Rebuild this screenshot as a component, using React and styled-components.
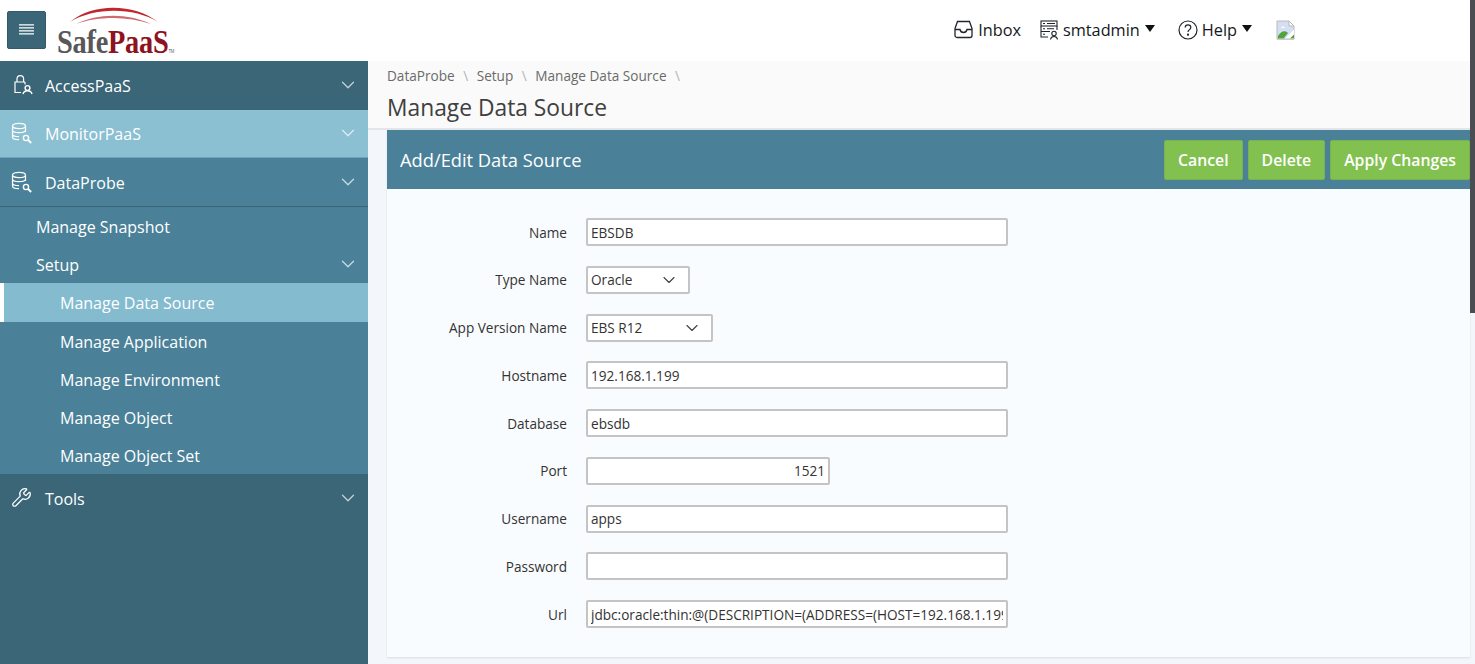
import React from "react";
import styled, { createGlobalStyle } from "styled-components";
import { ChevronDown, Wrench } from "lucide-react";

const Global = createGlobalStyle`
  html, body { margin: 0; padding: 0; height: 100%; overflow: hidden; background: #fff; }
  #root { height: 100%; }
  * { box-sizing: border-box; }
  body { font-family: "Open Sans", "Noto Sans", "Liberation Sans", sans-serif; }
`;

const Page = styled.div`
  width: 1475px; height: 664px; display: flex; flex-direction: column; position: relative; overflow: hidden;
`;
const Header = styled.header`
  height: 61px; flex: none; display: flex; align-items: center; background: #fff; padding-left: 7px;
`;
const MenuButton = styled.button`
  width: 39px; height: 38px; margin-top: -2px; border: 1px solid #33596a; border-radius: 2px; background: #3a6678;
  display: flex; align-items: center; justify-content: center; padding: 0;
`;
const Logo = styled.div`
  position: relative; width: 120px; height: 52px; margin: 5px 0 0 11px; flex: none;
`;
const LogoArc = styled.svg`
  position: absolute; left: 13px; top: 0;
`;
const LogoText = styled.div`
  position: absolute; left: 0; top: 16px; font-family: "Liberation Serif", serif; font-size: 33px; line-height: 38px; font-weight: 700; color: #58585a; white-space: nowrap; letter-spacing: -0.3px;
  transform: scaleX(0.86); transform-origin: left;
`;
const LogoRed = styled.span`
  color: #8f1220;
`;
const Tm = styled.span`
  font-size: 5px; font-weight: 400; color: #666; font-family: "Liberation Sans", sans-serif;
`;
const TopNav = styled.nav`
  margin-left: auto; display: flex; align-items: center; margin-right: 180px; margin-top: -2px;
`;
const TopItem = styled.div`
  display: flex; align-items: center; gap: ${p => p.$gap ?? 4}px; margin-left: ${p => p.$ml ?? 0}px; font-size: 16.3px; color: #14181c; line-height: 20px;
`;
const Caret = styled.span`
  width: 0; height: 0; border-left: 5px solid transparent; border-right: 5px solid transparent; border-top: 7px solid #111; margin: -3px 0 0 1px;
`;
const Body = styled.div`
  flex: 1; display: flex; min-height: 0;
`;
const Sidebar = styled.aside`
  width: 368px; flex: none; background: #3a6678; display: flex; flex-direction: column;
`;
const NavHead = styled.div`
  height: ${p => p.$h}px; flex: none; display: flex; align-items: center; padding: 0 9px 0 11px; color: #fff; font-size: 16px;
  background: ${p => p.$bg};
  border-bottom: 1px solid ${p => p.$line};
`;
const HeadIcon = styled.svg`
  width: 22px; height: 22px; flex: none; margin-right: 12px; margin-top: -1px;
`;
const Label = styled.span`
  flex: 1; margin-top: 1px;
`;
const SubLabel = styled.span`
  flex: 1;
`;
const Chevron = styled(ChevronDown)`
  width: 22px; height: 22px; opacity: .7; margin-top: -1px; stroke-width: 1.4;
`;
const SubChevron = styled(Chevron)`
  margin-top: -3px;
`;
const SubGroup = styled.div`
  background: #4a8199; display: flex; flex-direction: column; border-bottom: 1px solid #3a6678;
`;
const SubItem = styled.div`
  height: 38.2px; display: flex; align-items: center; color: #fff; font-size: 16px; padding: 2px 9px 0 ${p => p.$indent}px;
  ${p => p.$active && `background: #84bbcf; border-left: 4px solid #fff; padding-left: ${p.$indent - 4}px;`}
`;
const Main = styled.main`
  flex: 1; display: flex; flex-direction: column; background: #f3f7fb; min-width: 0;
`;
const Crumbs = styled.div`
  height: 69px; flex: none; background: #fafafa; border-bottom: 2px solid #e3e6e8; padding: 4px 0 0 19px;
`;
const CrumbRow = styled.div`
  display: flex; font-size: 13.6px; line-height: 22px; color: #6a6a6a; gap: 8.5px;
`;
const Slash = styled.span`
  color: #b5b5b5;
`;
const PageTitle = styled.h1`
  margin: 5px 0 0; font-size: 22.8px; line-height: 32px; font-weight: 400; color: #404040;
`;
const Panel = styled.section`
  margin: 0 5px 0 19px; background: #f9fcfe; height: 527px; box-shadow: 0 1px 2px rgba(0,0,0,.1);
`;
const PanelHead = styled.div`
  height: 59px; background: #4a8199; display: flex; align-items: center; padding-left: 13px;
`;
const PanelTitle = styled.h2`
  margin: 0; flex: 1; color: #fff; font-weight: 400; font-size: 18.3px;
`;
const Actions = styled.div`
  display: flex; gap: 5px;
`;
const ActionButton = styled.button`
  height: 40px; padding: 0 13px; border: 1px solid #78b44e; border-radius: 2px; background: #82c150; color: #fff;
  font-family: inherit; font-size: 15.8px; font-weight: 600; white-space: nowrap;
`;
const Form = styled.div`
  display: flex; flex-direction: column; gap: 19.75px; padding: 29px 0 0 0;
`;
const Row = styled.div`
  display: flex; align-items: center; height: 28px;
`;
const FieldLabel = styled.label`
  width: 180px; text-align: right; margin-right: 19px; font-size: 13.6px; color: #333;
`;
const Input = styled.input`
  width: ${p => p.$w ?? 422}px; height: 28px; border: 2px solid #c4c4c4; border-radius: 2px; background: #fff; padding: 0 3px;
  font-family: inherit; font-size: 13.6px; color: #333; text-align: ${p => p.$right ? "right" : "left"}; outline: none;
`;
const SelectBox = styled.div`
  width: ${p => p.$w}px; height: 28px; border: 2px solid #c4c4c4; border-radius: 2px; background: #fff; display: flex; align-items: center; justify-content: space-between;
  padding: 0 9px 0 3px; font-size: 13.6px; color: #333;
`;
const SelectChevron = styled(ChevronDown)`
  width: 20px; height: 20px; color: #444; stroke-width: 1.4;
`;
const Scrollbar = styled.div`
  position: absolute; right: 0; top: 0; width: 5px; height: 313px; background: #4a4e53;
`;

const DbSearch = () => (
  <HeadIcon viewBox="0 0 22 22" fill="none" stroke="#fff" strokeWidth="1.2">
    <ellipse cx="8" cy="4" rx="6.5" ry="2.6" />
    <path d="M1.500 4v11c0 1.500 2.900 2.700 6.500 2.700M14.500 4v6M1.500 8c0 1.500 2.900 2.600 6.500 2.600s6.500-1.100 6.500-2.600M1.500 12c0 1.500 2.900 2.600 6.500 2.600" />
    <circle cx="15" cy="16" r="2.600" strokeWidth="1.400" />
    <path d="M17 18l3.200 3" strokeWidth="1.800" />
  </HeadIcon>
);
const LockUser = () => (
  <HeadIcon viewBox="0 0 22 22" fill="none" stroke="#fff" strokeWidth="1.2">
    <path d="M6 8V5a3.300 3.300 0 0 1 6.600 0v3" />
    <path d="M14 8H4v10.500h6M14 8v2.500" />
    <circle cx="16.500" cy="14" r="2.400" strokeWidth="1.400" />
    <path d="M12 20c.5-2.200 2.200-3.300 4.500-3.300s4 1.100 4.500 3.300" strokeWidth="1.400" />
  </HeadIcon>
);
const ToolIcon = styled(Wrench)`
  width: 21px; height: 21px; margin-right: 13px; margin-top: -2px; flex: none; stroke-width: 1.4;
`;
const InboxIcon = () => (
  <svg width="19" height="19" viewBox="0 0 19 19" fill="none" stroke="#20262c" strokeWidth="1.300">
    <path d="M1 8.500 3.500 1.500h12L18 8.500v7a2 2 0 0 1-2 2H3a2 2 0 0 1-2-2z" />
    <path d="M1 9.500h5c.4 2 1.700 3 3.500 3s3.100-1 3.500-3h5" />
  </svg>
);
const ServerUser = () => (
  <svg width="19" height="20" viewBox="0 0 19 20" fill="none" stroke="#20262c" strokeWidth="1.100">
    <rect x="1" y="1" width="16" height="5" />
    <path d="M1 6v5.500h9M1 11.500V17h7M17 6v4" />
    <path d="M3 3.500h2M7 3.500h8M3 8.800h2M7 8.800h7M3 14.200h2" />
    <circle cx="14" cy="13.500" r="2.200" />
    <path d="M10.500 19.500c.3-2 1.600-3 3.500-3s3.200 1 3.500 3" />
  </svg>
);
const HelpIcon = () => (
  <svg width="20" height="20" viewBox="0 0 20 20" fill="none" stroke="#20262c" strokeWidth="1.200">
    <circle cx="10" cy="10" r="9" />
    <path d="M7.200 7.600c0-1.700 1.200-2.700 2.800-2.700s2.800 1 2.800 2.500c0 2.300-2.800 2.200-2.800 4.600" />
    <circle cx="10" cy="14.700" r=".5" fill="#20262c" />
  </svg>
);
const BrokenImage = () => (
  <svg width="19" height="20" viewBox="0 0 19 20">
    <path d="M1 1h12l5 5v13H1z" fill="#d5def2" stroke="#b9b9b9" />
    <path d="M13 1v5h5z" fill="#fff" stroke="#b9b9b9" />
    <path d="M5 8c1-2 3-2 4 0z" fill="#fff" />
    <path d="M2 18.500V16c3-5 7-6 10-3l-4.500 5.500z" fill="#4fa53b" />
    <path d="M18 9.500 8.500 19H18z" fill="#fff" />
    <path d="M18 14.500l-4 4h4z" fill="#4fa53b" />
    <path d="M1 19h17" stroke="#b9b9b9" />
  </svg>
);

const fields = [
  { label: "Name", value: "EBSDB" },
  { label: "Type Name", select: "Oracle", w: 104 },
  { label: "App Version Name", select: "EBS R12", w: 127 },
  { label: "Hostname", value: "192.168.1.199" },
  { label: "Database", value: "ebsdb" },
  { label: "Port", value: "1521", w: 244, right: true },
  { label: "Username", value: "apps" },
  { label: "Password", value: "" },
  { label: "Url", value: "jdbc:oracle:thin:@(DESCRIPTION=(ADDRESS=(HOST=192.168.1.199)(PORT=1521)))" },
];

const subItems = ["Manage Data Source", "Manage Application", "Manage Environment", "Manage Object", "Manage Object Set"];

export default function App() {
  return (
    <Page>
      <Global />
      <Header>
        <MenuButton aria-label="menu">
          <svg width="15" height="11" viewBox="0 0 15 11" stroke="#fff" strokeWidth="1.200"><path d="M0 .8h15M0 3.800h15M0 6.800h15M0 9.800h15" /></svg>
        </MenuButton>
        <Logo>
          <LogoArc width="90" height="20" viewBox="0 0 90 20" fill="none">
            <path d="M0 15C22 -4 64 -4 88 15C64 0 24 0 0 15Z" fill="#c1272d" />
            <path d="M6 17C28 6 58 6 81 17C58 9 28 9 6 17Z" fill="#cf6a6f" />
          </LogoArc>
          <LogoText>Safe<LogoRed>PaaS</LogoRed><Tm>TM</Tm></LogoText>
        </Logo>
        <TopNav>
          <TopItem $gap={5}><InboxIcon />Inbox</TopItem>
          <TopItem $ml={19}><ServerUser />smtadmin<Caret /></TopItem>
          <TopItem $ml={23}><HelpIcon />Help<Caret /></TopItem>
          <TopItem $ml={24}><BrokenImage /></TopItem>
        </TopNav>
      </Header>
      <Body>
        <Sidebar>
          <NavHead $h={49} $bg="#3a6678" $line="#3a6678"><LockUser /><Label>AccessPaaS</Label><Chevron /></NavHead>
          <NavHead $h={48} $bg="#8bbfd2" $line="#6fa5b9"><DbSearch /><Label>MonitorPaaS</Label><Chevron /></NavHead>
          <NavHead $h={49} $bg="#4a8199" $line="#3a6678"><DbSearch /><Label>DataProbe</Label><Chevron /></NavHead>
          <SubGroup>
            <SubItem $indent={36}>Manage Snapshot</SubItem>
            <SubItem $indent={36}><SubLabel>Setup</SubLabel><SubChevron /></SubItem>
            {subItems.map((s, i) => (
              <SubItem key={s} $indent={60} $active={i === 0}>{s}</SubItem>
            ))}
          </SubGroup>
          <NavHead $h={47} $bg="#3a6678" $line="#3a6678"><ToolIcon color="#fff" /><Label>Tools</Label><Chevron /></NavHead>
        </Sidebar>
        <Main>
          <Crumbs>
            <CrumbRow>
              <span>DataProbe</span><Slash>\</Slash><span>Setup</span><Slash>\</Slash><span>Manage Data Source</span><Slash>\</Slash>
            </CrumbRow>
            <PageTitle>Manage Data Source</PageTitle>
          </Crumbs>
          <Panel>
            <PanelHead>
              <PanelTitle>Add/Edit Data Source</PanelTitle>
              <Actions>
                <ActionButton>Cancel</ActionButton>
                <ActionButton>Delete</ActionButton>
                <ActionButton>Apply Changes</ActionButton>
              </Actions>
            </PanelHead>
            <Form>
              {fields.map(f => (
                <Row key={f.label}>
                  <FieldLabel>{f.label}</FieldLabel>
                  {f.select ? (
                    <SelectBox $w={f.w}>{f.select}<SelectChevron /></SelectBox>
                  ) : (
                    <Input readOnly value={f.value} $w={f.w} $right={f.right} />
                  )}
                </Row>
              ))}
            </Form>
          </Panel>
        </Main>
      </Body>
      <Scrollbar />
    </Page>
  );
}
